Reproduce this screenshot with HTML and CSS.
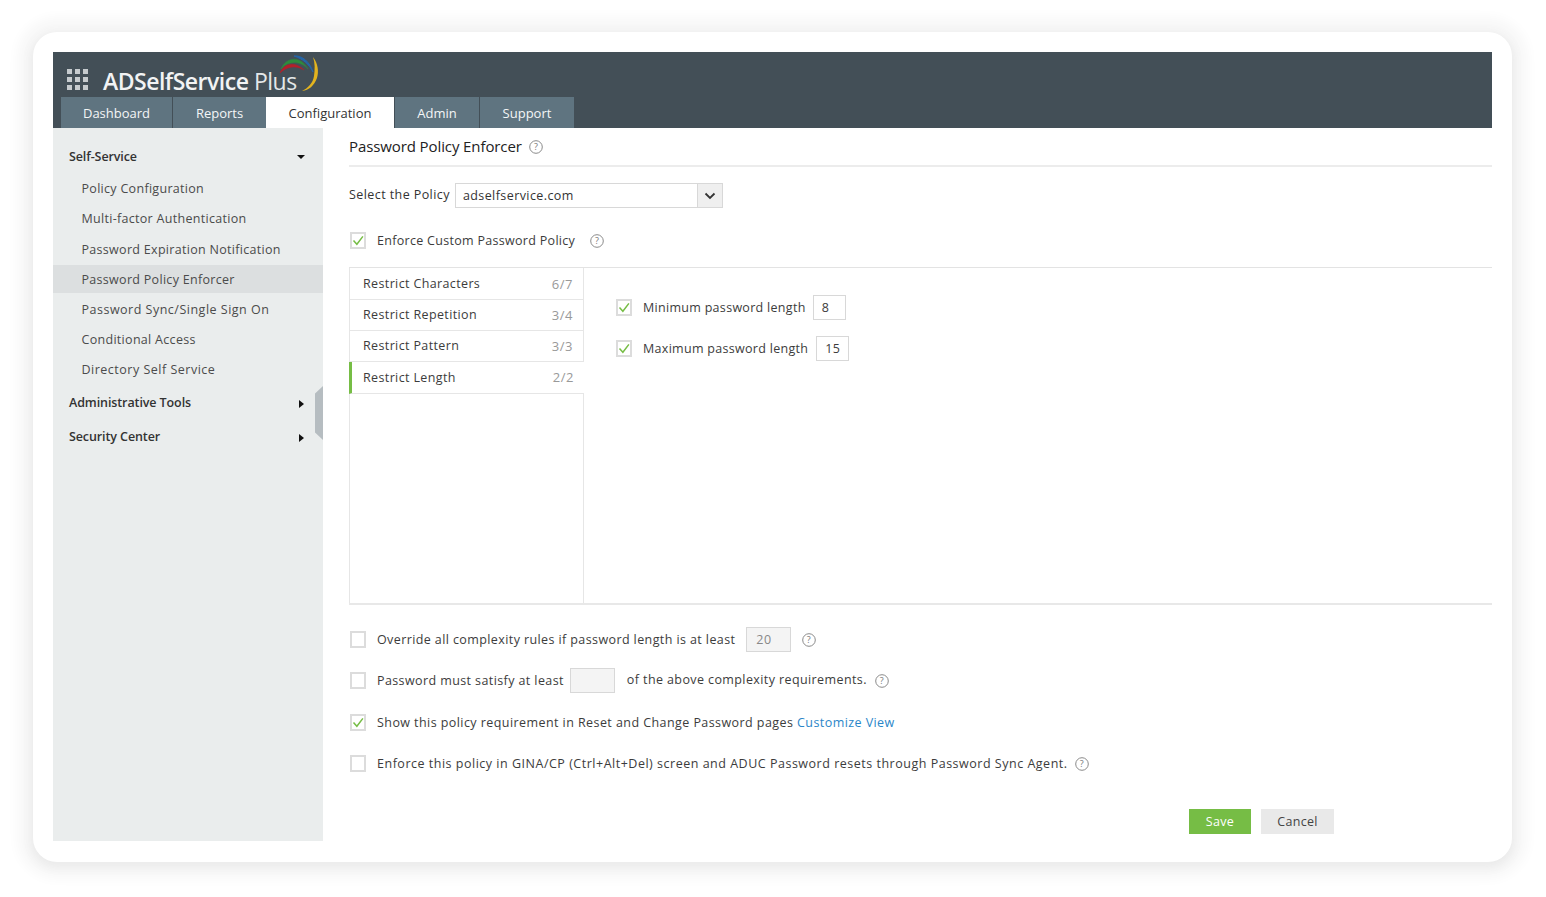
FILE: index.html
```html
<!DOCTYPE html>
<html lang="en">
<head>
<meta charset="utf-8">
<title>ADSelfService Plus</title>
<link rel="stylesheet" href="styles.css">
</head>
<body>
<div class="card">
  <header class="header">
    <div class="brand">
      <svg class="apps" width="21" height="21" viewBox="0 0 21 21" fill="#c6cbce">
        <rect x="0" y="0" width="5" height="5"/><rect x="8" y="0" width="5" height="5"/><rect x="16" y="0" width="5" height="5"/>
        <rect x="0" y="8" width="5" height="5"/><rect x="8" y="8" width="5" height="5"/><rect x="16" y="8" width="5" height="5"/>
        <rect x="0" y="16" width="5" height="5"/><rect x="8" y="16" width="5" height="5"/><rect x="16" y="16" width="5" height="5"/>
      </svg>
      <span class="logo-text"><span class="logo-strong">ADSelfService</span> <span class="logo-plus">Plus</span></span>
      <svg class="arcs" width="46" height="42" viewBox="0 0 46 42" fill="none">
        <path d="M18 4C26 3 34 10 37 20C33 12 27 7 18 4Z" fill="#2465a8" stroke="#2465a8" stroke-width="1"/>
        <path d="M5 17C10 5 24 3 32 17C25 9 13 8 5 17Z" fill="#2e8b3d" stroke="#2e8b3d" stroke-width="0.500"/>
        <path d="M4 21C8 11 19 9 28 18C20 13 11 14 4 21Z" fill="#b3202a" stroke="#b3202a" stroke-width="0.500"/>
        <path d="M37 5C42 11 43 20 41 26C38 34 33 38 26 39C32 36 37 31 38 24C39 17 39 11 37 5Z" fill="#e3b41f"/>
      </svg>
    </div>
    <nav class="tabs">
      <a class="tab tab-dash">Dashboard</a>
      <a class="tab tab-reports">Reports</a>
      <a class="tab tab-active">Configuration</a>
      <a class="tab tab-admin">Admin</a>
      <a class="tab tab-support">Support</a>
    </nav>
  </header>
  <div class="body-row">
    <aside class="sidebar">
      <div class="group group-first"><span>Self-Service</span><i class="caret-down"></i></div>
      <ul class="menu">
        <li>Policy Configuration</li>
        <li>Multi-factor Authentication</li>
        <li>Password Expiration Notification</li>
        <li class="selected">Password Policy Enforcer</li>
        <li class="wide">Password Sync/Single Sign On</li>
        <li>Conditional Access</li>
        <li class="wide">Directory Self Service</li>
      </ul>
      <div class="group"><span>Administrative Tools</span><i class="caret-right"></i></div>
      <div class="group"><span>Security Center</span><i class="caret-right"></i></div>
      <div class="collapse"></div>
    </aside>
    <main class="main">
      <h1 class="title">Password Policy Enforcer <svg class="help help-title" viewBox="0 0 14 14"><use href="#q"/></svg></h1>
      <div class="policy-row">
        <label class="policy-label">Select the Policy</label>
        <div class="select"><span class="select-value">adselfservice.com</span><span class="select-btn"><svg width="12" height="8" viewBox="0 0 12 8" fill="none"><path d="M1.5 1.5L6 6L10.500 1.500" stroke="#333" stroke-width="1.800"/></svg></span></div>
      </div>
      <div class="line line-enforce">
        <span class="cb"><svg viewBox="0 0 16 16"><use href="#tick"/></svg></span>
        <span>Enforce Custom Password Policy</span>
        <svg class="help help-enforce" viewBox="0 0 14 14"><use href="#q"/></svg>
      </div>
      <section class="panel">
        <ul class="rules">
          <li><span>Restrict Characters</span><em>6/7</em></li>
          <li><span>Restrict Repetition</span><em>3/4</em></li>
          <li><span>Restrict Pattern</span><em>3/3</em></li>
          <li class="active"><span>Restrict Length</span><em>2/2</em></li>
        </ul>
        <div class="rule-detail">
          <div class="line line-len">
            <span class="cb"><svg viewBox="0 0 16 16"><use href="#tick"/></svg></span>
            <span>Minimum password length</span>
            <span class="input input-len input-min">8</span>
          </div>
          <div class="line line-len">
            <span class="cb"><svg viewBox="0 0 16 16"><use href="#tick"/></svg></span>
            <span>Maximum password length</span>
            <span class="input input-len">15</span>
          </div>
        </div>
      </section>
      <div class="options">
        <div class="line">
          <span class="cb"></span>
          <span>Override all complexity rules if password length is at least</span>
          <span class="input input-off">20</span>
          <svg class="help help-gap" viewBox="0 0 14 14"><use href="#q"/></svg>
        </div>
        <div class="line">
          <span class="cb"></span>
          <span>Password must satisfy at least</span>
          <span class="input input-off input-tight"></span>
          <span class="after-input">of the above complexity requirements.</span>
          <svg class="help" viewBox="0 0 14 14"><use href="#q"/></svg>
        </div>
        <div class="line line-show">
          <span class="cb"><svg viewBox="0 0 16 16"><use href="#tick"/></svg></span>
          <span>Show this policy requirement in Reset and Change Password pages <a class="link">Customize View</a></span>
        </div>
        <div class="line line-long">
          <span class="cb"></span>
          <span>Enforce this policy in GINA/CP (Ctrl+Alt+Del) screen and ADUC Password resets through Password Sync Agent.</span>
          <svg class="help" viewBox="0 0 14 14"><use href="#q"/></svg>
        </div>
      </div>
      <div class="actions">
        <button class="btn btn-save">Save</button>
        <button class="btn btn-cancel">Cancel</button>
      </div>
    </main>
  </div>
</div>
<svg class="defs" width="0" height="0">
  <defs>
    <g id="q">
      <circle cx="7" cy="7" r="6.300" fill="none" stroke="#8a8a8a" stroke-width="1"/>
      <text x="7" y="10.200" text-anchor="middle" font-size="9" font-family="Open Sans, sans-serif" fill="#777">?</text>
    </g>
    <path id="tick" d="M2 8L6.500 13L14.500 2.500" fill="none" stroke="#76bd45" stroke-width="2"/>
  </defs>
</svg>
</body>
</html>
```
FILE: styles.css
```css
* { box-sizing: border-box; }
html, body { margin: 0; padding: 0; background: #fff; }
body {
  font-family: "Open Sans", "Noto Sans", sans-serif;
  font-size: 12.5px;
  color: #333;
  height: 897px;
  overflow: hidden;
  padding: 32px 34px 0 33px;
}
.card {
  height: 830px;
  background: #fff;
  border-radius: 24px;
  padding: 20px 20px 21px;
  display: flex;
  flex-direction: column;
  box-shadow: 0 3px 8px 3px #ebebeb, 0 1px 12px 16px #f8f8f8;
}
.header { height: 76px; background: #434f57; padding-left: 8px; display: flex; flex-direction: column; justify-content: flex-end; flex: none; }
.brand { display: flex; align-items: flex-start; height: 45px; padding-left: 6px; position: relative; }
.apps { margin-top: 17px; }
.logo-text { color: #f2f3f4; font-size: 23px; line-height: 32px; margin: 13px 0 0 15px; letter-spacing: -0.5px; }
.logo-strong { font-weight: 600; }
.logo-plus { color: #e4e7e8; }
.arcs { position: absolute; left: 215px; top: 0; }
.tabs { display: flex; height: 31px; gap: 1px; }
.tab { background: #5f7480; color: #f4f6f7; display: flex; align-items: center; justify-content: center; font-size: 13px; padding-top: 1px; }
.tab-dash { width: 111px; }
.tab-reports { width: 93px; }
.tab-active { width: 128px; background: #fff; color: #333; margin-left: -1px; }
.tab-admin { width: 84px; }
.tab-support { width: 94px; }
.body-row { display: flex; flex: 1; min-height: 0; }
.sidebar { width: 270px; flex: none; background: #eaeded; position: relative; }
.group { height: 34px; padding: 0 16px; display: flex; align-items: center; justify-content: space-between; color: #333; font-size: 12.5px; font-weight: 600; letter-spacing: -0.1px; position: relative; }
.group-first { margin-top: 11px; }
.caret-down { width: 0; height: 0; border: 4px solid transparent; border-top: 4px solid #111; border-bottom: 0; margin: 2px 2px 0 0; }
.caret-right { width: 0; height: 0; border: 4px solid transparent; border-left: 5px solid #111; border-right: 0; margin: 3px 3px 0 0; }
.menu { list-style: none; margin: 0 0 1px; padding: 0; }
.menu li { height: 30px; padding-left: 28.5px; display: flex; align-items: center; color: #4b4b4b; letter-spacing: 0.3px; }
.menu li:nth-child(3) { margin-top: 1px; }
.menu li.wide { letter-spacing: 0.5px; }
.menu li.selected { background: #dcdfe0; height: 28px; margin: 1px 0; }
.collapse { position: absolute; right: 0; top: 258px; width: 8px; height: 54px; background: #b6bdc1; clip-path: polygon(0 14%, 100% 0, 100% 100%, 0 86%); }
.main { flex: 1; padding-left: 26px; min-width: 0; display: flex; flex-direction: column; }
.title { margin: 0; height: 39px; border-bottom: 2px solid #ececec; font-size: 15px; font-weight: 400; color: #222; letter-spacing: -0.1px; line-height: 37px; display: flex; align-items: center; }
.help { width: 14px; height: 14px; flex: none; }
.help-title { margin-left: 7px; }
.policy-row { display: flex; align-items: center; margin-top: 16px; height: 25px; letter-spacing: 0.42px; }
.policy-label { margin: 0 5px 2px 0; }
.select { width: 268px; height: 25px; border: 1px solid #d8d8d8; display: flex; }
.select-value { flex: 1; padding-left: 7px; line-height: 24px; }
.select-btn { width: 25px; background: #efefef; border-left: 1px solid #d8d8d8; display: flex; align-items: center; justify-content: center; }
.line { display: flex; align-items: center; height: 25px; letter-spacing: 0.4px; color: #3c3c3c; }
.cb { width: 16px; height: 17px; border: 2px solid #dcdcdc; background: #fff; margin: 0 11px 0 1px; flex: none; display: flex; }
.cb svg { width: 12px; height: 13px; }
.line-enforce { margin-top: 20px; letter-spacing: 0.3px; }
.help-enforce { margin-left: 15px; }
.panel { display: flex; height: 338px; margin-top: 14px; border-top: 1px solid #e3e3e3; border-bottom: 2px solid #e8e8e8; }
.rules { list-style: none; margin: 0; padding: 1px 0 0; width: 235px; border: 1px solid #e6e6e6; border-width: 0 1px 0 1px; flex: none; }
.rules li { height: 31px; display: flex; align-items: center; justify-content: space-between; padding: 0 10px 1px 13px; border-bottom: 1px solid #e6e6e6; letter-spacing: 0.37px; color: #3c3c3c; }
.rules li.active { border-left: 3px solid #76bd45; margin-left: -1px; padding-left: 11px; height: 32px; margin-right: -1px; background: #fff; }
.rules em { font-style: normal; color: #999; font-size: 13px; letter-spacing: 0.5px; }
.rule-detail { padding: 27px 0 0 31px; }
.line-len { height: 25px; margin-bottom: 16px; letter-spacing: 0.3px; }
.input { border: 1px solid #d8d8d8; height: 25px; line-height: 23px; padding-left: 8px; display: inline-block; }
.input-len { width: 33px; margin-left: 8px; }
.input-min { margin-left: 7px; }
.options { margin-top: 22px; display: flex; flex-direction: column; gap: 16px; }
.input-off { width: 45px; background: #f4f4f4; color: #888; margin-left: 11px; padding-left: 9px; }
.input-tight { margin-left: 6px; }
.after-input { margin: 0 0 2px 12px; }
.options .help { margin-left: 8px; }
.options .help-gap { margin-left: 11px; }
.line-show { margin-top: 1px; letter-spacing: 0.43px; }
.line-long { letter-spacing: 0.51px; }
.line-long .help { margin-left: 7px; }
.link { color: #2a86c9; }
.actions { display: flex; gap: 10px; margin: 33px 0 0 840px; }
.btn { height: 25px; border: 0; font: inherit; letter-spacing: 0.3px; padding: 0; }
.btn-save { width: 62px; background: #76bd45; color: #fff; }
.btn-cancel { width: 73px; background: #e9e9e9; color: #444; }
.defs { position: absolute; }
```
